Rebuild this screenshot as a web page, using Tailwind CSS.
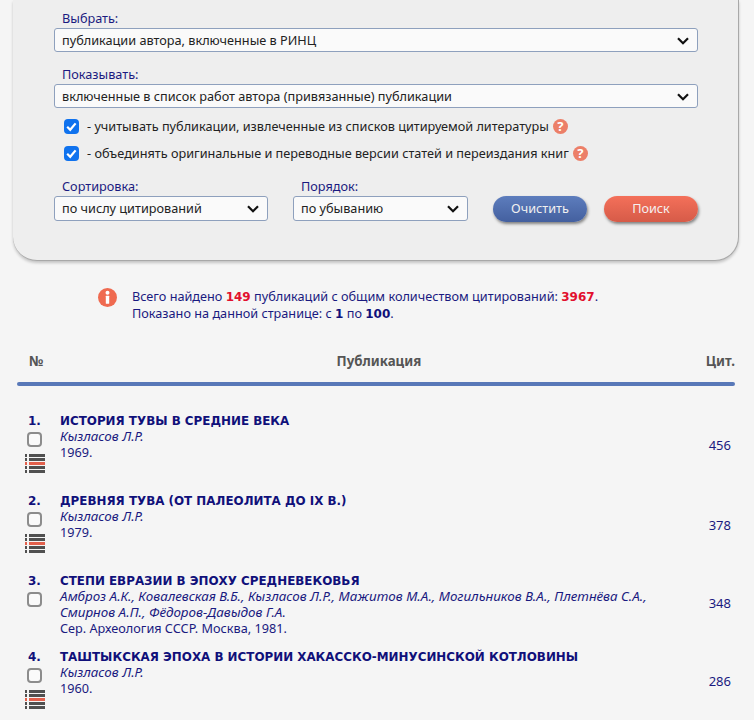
<!DOCTYPE html>
<html>
<head>
    <title>Публикации автора</title>
    <meta charset="UTF-8">
    <script src="https://cdn.jsdelivr.net/npm/@tailwindcss/browser@4"></script>
</head>
<body class="bg-[#f5f5f5] font-['Noto_Sans',sans-serif] text-[12.7px] text-[#222] overflow-hidden h-[720px]">
    <div class="mx-[13px] w-[726px] h-[261px] bg-[#eeeeee] rounded-b-[24px] border-r border-b border-[#a8a8a8] shadow-[0_2px_3px_rgba(0,0,0,0.2)] pl-[41px] pr-[40px] pt-[9px]">
        <div class="text-[#1a1a80] pl-2 h-[19px] leading-[18px]">Выбрать:</div>
        <div class="relative h-6 mb-[13px]">
            <select class="appearance-none w-full h-6 bg-[#fafafa] border border-[#8ea0bd] rounded-[3px] pl-[7px] leading-[22px]"><option>публикации автора, включенные в РИНЦ</option></select>
            <svg class="absolute right-[9px] top-[9px] w-[12px] h-[8px]" viewBox="0 0 12 8" fill="none" stroke="#111" stroke-width="2.2"><path d="M1 1.2l5 5 5-5"/></svg>
        </div>
        <div class="text-[#1a1a80] pl-2 h-[19px] leading-[18px]">Показывать:</div>
        <div class="relative h-6">
            <select class="appearance-none w-full h-6 bg-[#fafafa] border border-[#8ea0bd] rounded-[3px] pl-[7px] leading-[22px]"><option>включенные в список работ автора (привязанные) публикации</option></select>
            <svg class="absolute right-[9px] top-[9px] w-[12px] h-[8px]" viewBox="0 0 12 8" fill="none" stroke="#111" stroke-width="2.2"><path d="M1 1.2l5 5 5-5"/></svg>
        </div>
        <div class="flex items-center pl-[10px] mt-[10px] h-[17px]">
            <span class="relative w-[15px] h-[15px] mr-[8px]">
                <input type="checkbox" checked class="appearance-none block w-[15px] h-[15px] rounded-[4px] bg-[#0f72ee]">
                <svg class="absolute left-0 top-0 w-[15px] h-[15px]" viewBox="0 0 15 15" fill="none" stroke="#fff" stroke-width="2.2"><path d="M3.2 7.8l3 3 5.4-6.4"/></svg>
            </span>
            <span class="mr-[4px]">- учитывать публикации, извлеченные из списков цитируемой литературы</span>
            <span class="w-[15px] h-[15px] rounded-full bg-[#ec7f68] text-white text-[13px] font-bold leading-[15px] text-center">?</span>
        </div>
        <div class="flex items-center pl-[10px] mt-[10px] h-[17px]">
            <span class="relative w-[15px] h-[15px] mr-[8px]">
                <input type="checkbox" checked class="appearance-none block w-[15px] h-[15px] rounded-[4px] bg-[#0f72ee]">
                <svg class="absolute left-0 top-0 w-[15px] h-[15px]" viewBox="0 0 15 15" fill="none" stroke="#fff" stroke-width="2.2"><path d="M3.2 7.8l3 3 5.4-6.4"/></svg>
            </span>
            <span class="mr-[4px]">- объединять оригинальные и переводные версии статей и переиздания книг</span>
            <span class="w-[15px] h-[15px] rounded-full bg-[#ec7f68] text-white text-[13px] font-bold leading-[15px] text-center">?</span>
        </div>
        <div class="flex items-end mt-[15px]">
            <div class="w-[214px] mr-[25px]">
                <div class="text-[#1a1a80] pl-2 h-[19px] leading-[18px]">Сортировка:</div>
                <div class="relative h-[25px]">
                    <select class="appearance-none w-full h-[25px] bg-[#fafafa] border border-[#8ea0bd] rounded-[3px] pl-[7px]"><option>по числу цитирований</option></select>
                    <svg class="absolute right-[9px] top-[9px] w-[12px] h-[8px]" viewBox="0 0 12 8" fill="none" stroke="#111" stroke-width="2.2"><path d="M1 1.2l5 5 5-5"/></svg>
                </div>
            </div>
            <div class="w-[175px] mr-[25px]">
                <div class="text-[#1a1a80] pl-2 h-[19px] leading-[18px]">Порядок:</div>
                <div class="relative h-[25px]">
                    <select class="appearance-none w-full h-[25px] bg-[#fafafa] border border-[#8ea0bd] rounded-[3px] pl-[7px]"><option>по убыванию</option></select>
                    <svg class="absolute right-[9px] top-[9px] w-[12px] h-[8px]" viewBox="0 0 12 8" fill="none" stroke="#111" stroke-width="2.2"><path d="M1 1.2l5 5 5-5"/></svg>
                </div>
            </div>
            <button class="w-[94px] h-[26px] -mb-px rounded-[13px] bg-linear-to-b from-[#5d7dbd] to-[#44609f] text-[#f0f0f0] shadow-[1px_2px_3px_rgba(0,0,0,0.45)] mr-[17px]">Очистить</button>
            <button class="w-[94px] h-[26px] -mb-px rounded-[13px] bg-linear-to-b from-[#f4705a] to-[#d65b48] text-[#f5f0f0] shadow-[1px_2px_3px_rgba(0,0,0,0.45)]">Поиск</button>
        </div>
    </div>

    <div class="flex pl-[98px] pt-[26px] h-[90px]">
        <svg class="w-[19px] h-[19px] mr-[15px] mt-[1px]" viewBox="0 0 19 19"><circle cx="9.5" cy="9.5" r="9.5" fill="#ef6a50"/><circle cx="9.5" cy="4.8" r="2" fill="#fff"/><rect x="7.8" y="7.8" width="3.4" height="8" rx="0.5" fill="#fff"/></svg>
        <div class="text-[#1a1a80] leading-4 pt-[1px]">
            <div>Всего найдено <b class="font-['DejaVu_Sans',sans-serif] text-[12px] text-[#e2102e]">149</b> публикаций с общим количеством цитирований: <b class="font-['DejaVu_Sans',sans-serif] text-[12px] text-[#e2102e]">3967</b>.</div>
            <div>Показано на данной странице: с <b class="font-['DejaVu_Sans',sans-serif] text-[12px] text-[#10107a]">1</b> по <b class="font-['DejaVu_Sans',sans-serif] text-[12px] text-[#10107a]">100</b>.</div>
        </div>
    </div>

    <div class="pl-[17px] pr-[19px]">
        <div class="flex h-[31px] items-start font-bold text-[#555] leading-[20px] pl-[12px]">
            <div class="w-[40px] text-[14px]">№</div>
            <div class="flex-1 text-center pr-[17px] text-[13.3px]">Публикация</div>
            <div class="text-[13.3px]">Цит.</div>
        </div>
        <div class="h-1 rounded-full bg-[#5878b8]"></div>
    </div>

    <div class="pt-[27px]">
        <div class="flex h-[80px] pl-[28px] pr-[23px]">
            <div class="w-[32px]">
                <div class="font-['DejaVu_Sans',sans-serif] font-bold text-[12px] text-[#10107a] leading-4">1.</div>
                <input type="checkbox" class="appearance-none block w-[15px] h-[15px] -ml-px mt-[3px] bg-[#fafafa] border-2 border-[#8c8c8c] rounded-[4px]">
                <svg class="w-[20px] h-[19px] mt-[7px] -ml-[3px]" viewBox="0 0 20 19"><g fill="#505050"><rect y="0" width="2" height="3"/><rect x="4" y="0" width="16" height="3"/><rect y="4" width="2" height="3"/><rect x="4" y="4" width="16" height="3"/><rect y="12" width="2" height="3"/><rect x="4" y="12" width="16" height="3"/><rect y="16" width="2" height="3"/><rect x="4" y="16" width="16" height="3"/></g><g fill="#e2604c"><rect y="8" width="2" height="3"/><rect x="4" y="8" width="16" height="3"/></g></svg>
            </div>
            <div class="flex-1 leading-4 pr-[30px]">
                <div class="pt-px leading-[14px] font-['DejaVu_Sans',sans-serif] font-bold text-[11.9px] text-[#10107a]">ИСТОРИЯ ТУВЫ В СРЕДНИЕ ВЕКА</div>
                <div class="italic text-[#1a1a80] text-[13.4px]">Кызласов Л.Р.</div>
                <div class="text-[#1a1a80]">1969.</div>
            </div>
            <div class="self-center text-[#1a1a80] text-[13px] pb-[14px]">456</div>
        </div>
        <div class="flex h-[80px] pl-[28px] pr-[23px]">
            <div class="w-[32px]">
                <div class="font-['DejaVu_Sans',sans-serif] font-bold text-[12px] text-[#10107a] leading-4">2.</div>
                <input type="checkbox" class="appearance-none block w-[15px] h-[15px] -ml-px mt-[3px] bg-[#fafafa] border-2 border-[#8c8c8c] rounded-[4px]">
                <svg class="w-[20px] h-[19px] mt-[7px] -ml-[3px]" viewBox="0 0 20 19"><g fill="#505050"><rect y="0" width="2" height="3"/><rect x="4" y="0" width="16" height="3"/><rect y="4" width="2" height="3"/><rect x="4" y="4" width="16" height="3"/><rect y="12" width="2" height="3"/><rect x="4" y="12" width="16" height="3"/><rect y="16" width="2" height="3"/><rect x="4" y="16" width="16" height="3"/></g><g fill="#e2604c"><rect y="8" width="2" height="3"/><rect x="4" y="8" width="16" height="3"/></g></svg>
            </div>
            <div class="flex-1 leading-4 pr-[30px]">
                <div class="pt-px leading-[14px] font-['DejaVu_Sans',sans-serif] font-bold text-[11.9px] text-[#10107a]">ДРЕВНЯЯ ТУВА (ОТ ПАЛЕОЛИТА ДО IX В.)</div>
                <div class="italic text-[#1a1a80] text-[13.4px]">Кызласов Л.Р.</div>
                <div class="text-[#1a1a80]">1979.</div>
            </div>
            <div class="self-center text-[#1a1a80] text-[13px] pb-[14px]">378</div>
        </div>
        <div class="flex h-[76px] pl-[28px] pr-[23px]">
            <div class="w-[32px]">
                <div class="font-['DejaVu_Sans',sans-serif] font-bold text-[12px] text-[#10107a] leading-4">3.</div>
                <input type="checkbox" class="appearance-none block w-[15px] h-[15px] -ml-px mt-[3px] bg-[#fafafa] border-2 border-[#8c8c8c] rounded-[4px]">
            </div>
            <div class="flex-1 leading-4 pr-[30px]">
                <div class="pt-px leading-[14px] font-['DejaVu_Sans',sans-serif] font-bold text-[11.9px] text-[#10107a]">СТЕПИ ЕВРАЗИИ В ЭПОХУ СРЕДНЕВЕКОВЬЯ</div>
                <div class="italic text-[#1a1a80] text-[13.4px]">Амброз А.К., Ковалевская В.Б., Кызласов Л.Р., Мажитов М.А., Могильников В.А., Плетнёва С.А., Смирнов А.П., Фёдоров-Давыдов Г.А.</div>
                <div class="text-[#1a1a80]">Сер. Археология СССР. Москва, 1981.</div>
            </div>
            <div class="self-center text-[#1a1a80] text-[13px] pb-[14px]">348</div>
        </div>
        <div class="flex h-[80px] pl-[28px] pr-[23px]">
            <div class="w-[32px]">
                <div class="font-['DejaVu_Sans',sans-serif] font-bold text-[12px] text-[#10107a] leading-4">4.</div>
                <input type="checkbox" class="appearance-none block w-[15px] h-[15px] -ml-px mt-[3px] bg-[#fafafa] border-2 border-[#8c8c8c] rounded-[4px]">
                <svg class="w-[20px] h-[19px] mt-[7px] -ml-[3px]" viewBox="0 0 20 19"><g fill="#505050"><rect y="0" width="2" height="3"/><rect x="4" y="0" width="16" height="3"/><rect y="4" width="2" height="3"/><rect x="4" y="4" width="16" height="3"/><rect y="12" width="2" height="3"/><rect x="4" y="12" width="16" height="3"/><rect y="16" width="2" height="3"/><rect x="4" y="16" width="16" height="3"/></g><g fill="#e2604c"><rect y="8" width="2" height="3"/><rect x="4" y="8" width="16" height="3"/></g></svg>
            </div>
            <div class="flex-1 leading-4 pr-[30px]">
                <div class="pt-px leading-[14px] font-['DejaVu_Sans',sans-serif] font-bold text-[11.9px] text-[#10107a]">ТАШТЫКСКАЯ ЭПОХА В ИСТОРИИ ХАКАССКО-МИНУСИНСКОЙ КОТЛОВИНЫ</div>
                <div class="italic text-[#1a1a80] text-[13.4px]">Кызласов Л.Р.</div>
                <div class="text-[#1a1a80]">1960.</div>
            </div>
            <div class="self-center text-[#1a1a80] text-[13px] pb-[14px]">286</div>
        </div>
    </div>
</body>
</html>
